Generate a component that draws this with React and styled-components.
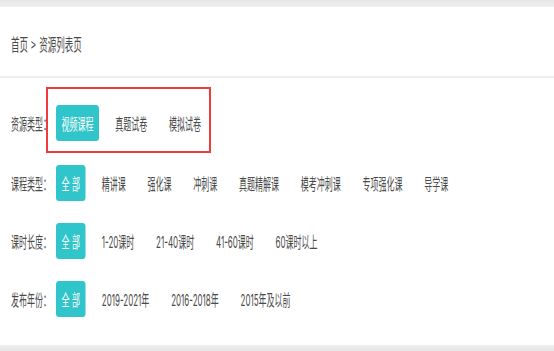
import React from 'react';
import styled, { createGlobalStyle } from 'styled-components';

// The reference is rendered horizontally compressed; reproduce that with one scaleX stage.
const SX = 0.5;

const Global = createGlobalStyle`
  html, body { margin: 0; padding: 0; background: #fff; overflow: hidden; }
  body { font-family: "Noto Sans CJK SC", "Noto Sans", sans-serif; }
`;

const Viewport = styled.div`
  width: 554px;
  height: 351px;
  overflow: hidden;
  background: #fff;
`;

const Stage = styled.div`
  width: ${554 / SX}px;
  height: 351px;
  transform: scaleX(${SX});
  transform-origin: 0 0;
  display: flex;
  flex-direction: column;
`;

const TopBar = styled.div`
  height: 7px;
  flex-shrink: 0;
  background: linear-gradient(#e6e6e6, #efefef);
`;

const Header = styled.header`
  height: 71px;
  box-sizing: border-box;
  flex-shrink: 0;
  display: flex;
  align-items: center;
  padding: 4px 0 0 22px;
  border-bottom: 2px solid #eeeeee;
  font-size: 17px;
  color: #4a4a4a;
`;

const Sep = styled.span`
  margin: 0 7px 0 6px;
`;

const Filters = styled.div`
  flex: 1;
  display: flex;
  flex-direction: column;
  padding: 9px 0 0 22px;
`;

const Row = styled.div`
  display: flex;
  align-items: baseline;
  margin-bottom: ${(p) => (p.$highlight ? 12 : 22)}px;
`;

const Label = styled.span`
  width: 70px;
  flex-shrink: 0;
  font-size: 16px;
  color: #4a4a4a;
  white-space: nowrap;
`;

const Group = styled.div`
  display: flex;
  align-items: center;
  gap: 21.5px;
  border-style: solid;
  border-color: ${(p) => (p.$highlight ? '#ef3a3f' : 'transparent')};
  border-width: ${(p) => (p.$highlight ? '2px 4px' : '0 4px')};
  padding: ${(p) => (p.$highlight ? '16px 5px 10px 16px' : '0 0 0 16px')};
`;

const Option = styled.span`
  display: inline-flex;
  align-items: center;
  height: 36px;
  padding: 0 ${(p) => (p.$spaced ? 6 : 11)}px 0 11px;
  font-family: Inter, "Noto Sans CJK SC", sans-serif;
  font-size: 16px;
  white-space: nowrap;
  letter-spacing: ${(p) => (p.$spaced ? '5px' : 'normal')};
  color: ${(p) => (p.$active ? '#fff' : '#4a4a4a')};
  background: ${(p) => (p.$active ? '#2fc5ca' : 'transparent')};
  border-radius: 6px / 3.5px;
`;

const BottomBar = styled.div`
  height: 6px;
  flex-shrink: 0;
  background: linear-gradient(#efefef, #e6e6e6);
`;

const rows = [
  { label: '资源类型：', highlight: true, items: ['视频课程', '真题试卷', '模拟试卷'], allFirst: false },
  { label: '课程类型：', items: ['精讲课', '强化课', '冲刺课', '真题精解课', '模考冲刺课', '专项强化课', '导学课'], allFirst: true },
  { label: '课时长度：', items: ['1-20课时', '21-40课时', '41-60课时', '60课时以上'], allFirst: true },
  { label: '发布年份：', items: ['2019-2021年', '2016-2018年', '2015年及以前'], allFirst: true },
];

export default function App() {
  return (
    <Viewport>
      <Global />
      <Stage>
        <TopBar />
        <Header>
          首页<Sep>&gt;</Sep>资源列表页
        </Header>
        <Filters>
          {rows.map((r) => (
            <Row key={r.label} $highlight={r.highlight}>
              <Label>{r.label}</Label>
              <Group $highlight={r.highlight}>
                {r.allFirst && (
                  <Option $active $spaced>
                    全部
                  </Option>
                )}
                {r.items.map((it, i) => (
                  <Option key={it} $active={!r.allFirst && i === 0}>
                    {it}
                  </Option>
                ))}
              </Group>
            </Row>
          ))}
        </Filters>
        <BottomBar />
      </Stage>
    </Viewport>
  );
}
